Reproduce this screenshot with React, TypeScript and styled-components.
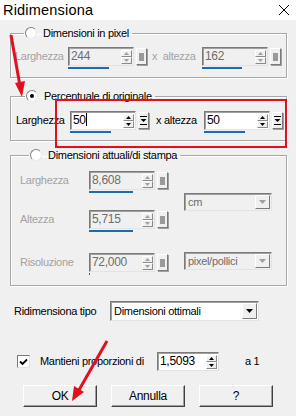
import React from 'react';
import styled, { createGlobalStyle } from 'styled-components';

const Global = createGlobalStyle`
  html, body { margin: 0; padding: 0; background: #f0f0f0; }
  body {
    font-family: "Liberation Sans", Arial, sans-serif;
    font-size: 11px;
    letter-spacing: -0.3px;
    color: #000;
    width: 296px;
    height: 416px;
    overflow: hidden;
  }
`;

const Dialog = styled.div`
  position: relative;
  width: 296px;
  height: 416px;
  display: flex;
  flex-direction: column;
  background: #f0f0f0;
`;

const TitleBar = styled.div`
  height: 20px;
  background: #fff;
  display: flex;
  align-items: center;
  justify-content: space-between;
  padding: 0 6px 0 3px;
  font-size: 14.5px;
  letter-spacing: 0.2px;
`;

const Content = styled.div`
  display: flex;
  flex-direction: column;
  padding: 0 9px 0 10px;
`;

const Group = styled.fieldset<{ $mt: number; $pt: number; $pb: number; $pl: number }>`
  margin: ${(p) => p.$mt}px 0 0;
  padding: ${(p) => p.$pt}px 0 ${(p) => p.$pb}px ${(p) => p.$pl}px;
  border: 1px solid #a8a8a8;
  box-shadow: inset 1px 1px 0 #fff, 1px 1px 0 #fff;
  min-width: 0;
`;

const Legend = styled.legend`
  margin-left: 9px;
  padding: 0 3px 0 1px;
  height: 14px;
  display: flex;
  align-items: center;
  gap: 6px;
  line-height: 14px;
`;

const Radio = styled.span<{ $checked?: boolean }>`
  width: 12px;
  height: 12px;
  box-sizing: border-box;
  border-radius: 50%;
  border: 1px solid;
  border-color: #808080 #e8e8e8 #e8e8e8 #808080;
  background: #fff;
  display: inline-flex;
  align-items: center;
  justify-content: center;
  &::after {
    content: '';
    width: 4px;
    height: 4px;
    border-radius: 50%;
    background: ${(p) => (p.$checked ? '#000' : 'transparent')};
  }
`;

const Row = styled.div<{ $mt?: number }>`
  display: flex;
  align-items: flex-start;
  margin-top: ${(p) => p.$mt ?? 0}px;
`;

const Label = styled.span<{ $w?: number; $disabled?: boolean; $ml?: number; $h?: number }>`
  display: inline-block;
  width: ${(p) => (p.$w ? `${p.$w}px` : 'auto')};
  margin-left: ${(p) => p.$ml ?? 0}px;
  line-height: ${(p) => p.$h ?? 19}px;
  color: ${(p) => (p.$disabled ? '#a3a3a3' : '#000')};
  white-space: nowrap;
  flex-shrink: 0;
`;

const Spin = styled.div`
  display: flex;
  flex-direction: column;
  flex-shrink: 0;
`;

const SpinTop = styled.div`
  display: flex;
  align-items: flex-start;
  gap: 2px;
`;

const Field = styled.div<{ $w: number; $disabled?: boolean; $h?: number }>`
  width: ${(p) => p.$w}px;
  height: ${(p) => p.$h ?? 19}px;
  box-sizing: border-box;
  border: 1px solid;
  border-color: #7a7a7a #e3e3e3 #e3e3e3 #7a7a7a;
  box-shadow: inset 1px 1px 0 #a0a0a0;
  background: ${(p) => (p.$disabled ? '#f0f0f0' : '#fff')};
  color: ${(p) => (p.$disabled ? '#6d6d6d' : '#000')};
  display: flex;
  align-items: center;
  padding: 0 1px 0 2px;
  font-size: 12px;
`;

const FieldText = styled.span`
  flex: 1;
  line-height: 15px;
  white-space: nowrap;
  overflow: hidden;
`;

const Caret = styled.span`
  display: inline-block;
  width: 1px;
  height: 13px;
  background: #000;
  vertical-align: -2px;
`;

const Arrows = styled.div`
  display: flex;
  flex-direction: column;
  width: 11px;
`;

const ArrowBtn = styled.div`
  height: 7px;
  box-sizing: border-box;
  border: 1px solid;
  border-color: #fff #8a8a8a #8a8a8a #fff;
  background: #f0f0f0;
  display: flex;
  align-items: center;
  justify-content: center;
`;

const ExtraBtn = styled.div`
  width: 11px;
  height: 17px;
  margin-top: 1px;
  box-sizing: border-box;
  border: 1px solid;
  border-color: #fff #7a7a7a #7a7a7a #fff;
  box-shadow: 1px 1px 0 #a0a0a0;
  background: #f0f0f0;
  display: flex;
  align-items: center;
  justify-content: center;
`;

const GraySquare = styled.span`
  width: 5px;
  height: 8px;
  background: #9a9a9a;
`;

const Bar = styled.div`
  height: 2px;
  margin-top: 1px;
  background: #1c6bb0;
`;

const Tri = ({ up, color }: { up?: boolean; color: string }) => (
  <svg width="5" height="3" viewBox="0 0 5 3">
    <path d={up ? 'M2.5 0 L5 3 L0 3 Z' : 'M0 0 L5 0 L2.5 3 Z'} fill={color} />
  </svg>
);

const SpinBox = ({
  value,
  disabled,
  bar,
  extra = true,
  w = 66,
  caret,
}: {
  value: string;
  disabled?: boolean;
  bar?: number;
  extra?: boolean;
  w?: number;
  caret?: boolean;
}) => (
  <Spin>
    <SpinTop>
      <Field $w={w} $disabled={disabled}>
        <FieldText>
          {value}
          {caret && <Caret />}
        </FieldText>
        <Arrows>
          <ArrowBtn>
            <Tri up color={disabled ? '#a0a0a0' : '#000'} />
          </ArrowBtn>
          <ArrowBtn>
            <Tri color={disabled ? '#a0a0a0' : '#000'} />
          </ArrowBtn>
        </Arrows>
      </Field>
      {extra && (
        <ExtraBtn>
          {disabled ? (
            <GraySquare />
          ) : (
            <svg width="7" height="9" viewBox="0 0 7 9">
              <rect x="0" y="0" width="7" height="1" fill="#000" />
              <path d="M0.5 3 L6.5 3 L3.5 6 Z" fill="#000" />
              <rect x="0" y="8" width="7" height="1" fill="#000" />
            </svg>
          )}
        </ExtraBtn>
      )}
    </SpinTop>
    {bar !== undefined && <Bar style={{ width: `${bar}px` }} />}
  </Spin>
);

const Select = styled.div<{ $w: number; $h: number; $disabled?: boolean }>`
  width: ${(p) => p.$w}px;
  height: ${(p) => p.$h}px;
  box-sizing: border-box;
  border: 1px solid;
  border-color: #7a7a7a #e3e3e3 #e3e3e3 #7a7a7a;
  box-shadow: inset 1px 1px 0 #a0a0a0;
  background: ${(p) => (p.$disabled ? '#f0f0f0' : '#fff')};
  color: ${(p) => (p.$disabled ? '#6d6d6d' : '#000')};
  display: flex;
  align-items: center;
  padding: 1px 1px 1px 3px;
  flex-shrink: 0;
`;

const SelectText = styled.span`
  flex: 1;
  white-space: nowrap;
`;

const SelectBtn = styled.div`
  width: 15px;
  align-self: stretch;
  box-sizing: border-box;
  border: 1px solid;
  border-color: #fff #7a7a7a #7a7a7a #fff;
  background: #f0f0f0;
  display: flex;
  align-items: center;
  justify-content: center;
`;

const Dropdown = ({
  value,
  w,
  h,
  disabled,
}: {
  value: string;
  w: number;
  h: number;
  disabled?: boolean;
}) => (
  <Select $w={w} $h={h} $disabled={disabled}>
    <SelectText>{value}</SelectText>
    <SelectBtn>
      <svg width="7" height="4" viewBox="0 0 7 4">
        <path d="M0 0 L7 0 L3.5 4 Z" fill={disabled ? '#a0a0a0' : '#000'} />
      </svg>
    </SelectBtn>
  </Select>
);

const PrintGrid = styled.div`
  display: flex;
  align-items: flex-start;
`;

const Col = styled.div<{ $mt?: number; $ml?: number }>`
  display: flex;
  flex-direction: column;
  margin-top: ${(p) => p.$mt ?? 0}px;
  margin-left: ${(p) => p.$ml ?? 0}px;
`;

const CheckBox = styled.span`
  width: 13px;
  height: 13px;
  box-sizing: border-box;
  border: 1px solid;
  border-color: #7a7a7a #e3e3e3 #e3e3e3 #7a7a7a;
  background: #fff;
  display: inline-flex;
  align-items: center;
  justify-content: center;
  margin: 3px 0 0 7px;
  flex-shrink: 0;
`;

const Buttons = styled.div`
  display: flex;
  gap: 14px;
  margin-top: 14px;
  padding-left: 13px;
`;

const Button = styled.button`
  width: 74px;
  height: 22px;
  box-sizing: border-box;
  font: inherit;
  letter-spacing: inherit;
  font-size: 12px;
  color: #000;
  background: #f0f0f0;
  border: 1px solid;
  border-color: #fff #404040 #404040 #fff;
  box-shadow: inset -1px -1px 0 #a0a0a0;
  padding: 0;
`;

const Overlay = styled.svg`
  position: absolute;
  left: 0;
  top: 0;
  pointer-events: none;
`;

const Highlight = styled.div`
  position: absolute;
  left: 55px;
  top: 99px;
  width: 232px;
  height: 49px;
  box-sizing: border-box;
  border: 2px solid #e0101c;
  pointer-events: none;
`;

export default function App() {
  return (
    <Dialog>
      <Global />
      <TitleBar>
        <span>Ridimensiona</span>
        <svg width="12" height="12" viewBox="0 0 12 12">
          <path d="M1 1 L11 11 M11 1 L1 11" stroke="#000" strokeWidth="1" />
        </svg>
      </TitleBar>
      <Content>
        <Group $mt={6} $pt={7} $pb={8} $pl={4}>
          <Legend>
            <Radio />
            <span>Dimensioni in pixel</span>
          </Legend>
          <Row>
            <Label $w={53} $disabled>Larghezza</Label>
            <SpinBox value="244" disabled bar={41} />
            <Label $ml={5} $w={50} $disabled>x&nbsp;&nbsp;altezza</Label>
            <SpinBox value="162" disabled bar={40} />
          </Row>
        </Group>

        <Group $mt={11} $pt={8} $pb={7} $pl={5}>
          <Legend>
            <Radio $checked />
            <span>Percentuale di originale</span>
          </Legend>
          <Row>
            <Label $w={54}>Larghezza</Label>
            <SpinBox value="50" bar={41} caret />
            <Label $ml={7} $w={48}>x altezza</Label>
            <SpinBox value="50" bar={41} />
          </Row>
        </Group>

        <Group $mt={7} $pt={9} $pb={10} $pl={9}>
          <Legend>
            <Radio />
            <span>Dimensioni attuali/di stampa</span>
          </Legend>
          <PrintGrid>
            <Col>
              <Row>
                <Label $w={69} $disabled>Larghezza</Label>
                <SpinBox value="8,608" disabled bar={44} />
              </Row>
              <Row $mt={17}>
                <Label $w={69} $disabled>Altezza</Label>
                <SpinBox value="5,715" disabled bar={44} />
              </Row>
              <Row $mt={21}>
                <Label $w={69} $disabled>Risoluzione</Label>
                <SpinBox value="72,000" disabled bar={1} />
              </Row>
            </Col>
            <Col $ml={16} $mt={22}>
              <Dropdown value="cm" w={88} h={18} disabled />
              <Col $mt={41}>
                <Dropdown value="pixel/pollici" w={88} h={18} disabled />
              </Col>
            </Col>
          </PrintGrid>
        </Group>

        <Row $mt={15}>
          <Label $ml={4} $w={96} $h={20}>Ridimensiona tipo</Label>
          <Dropdown value="Dimensioni ottimali" w={149} h={20} />
        </Row>

        <Row $mt={31}>
          <CheckBox>
            <svg width="9" height="8" viewBox="0 0 9 8">
              <path d="M1 3.5 L3.5 6 L8 1.5" stroke="#000" strokeWidth="1.8" fill="none" />
            </svg>
          </CheckBox>
          <Label $ml={10} $w={117}>Mantieni proporzioni di</Label>
          <SpinBox value="1,5093" w={62} extra={false} />
          <Label $ml={26}>a 1</Label>
        </Row>

        <Buttons>
          <Button>OK</Button>
          <Button>Annulla</Button>
          <Button>?</Button>
        </Buttons>
      </Content>

      <Highlight />
      <Overlay width="296" height="416" viewBox="0 0 296 416">
        <path d="M11 35 L20 86" stroke="#e0101c" strokeWidth="3" />
        <path d="M22 97 L15 83 L25 81 Z" fill="#e0101c" />
        <path d="M107 341 L79 390" stroke="#e0101c" strokeWidth="3" />
        <path d="M72 401 L74 386 L84 392 Z" fill="#e0101c" />
      </Overlay>
    </Dialog>
  );
}
